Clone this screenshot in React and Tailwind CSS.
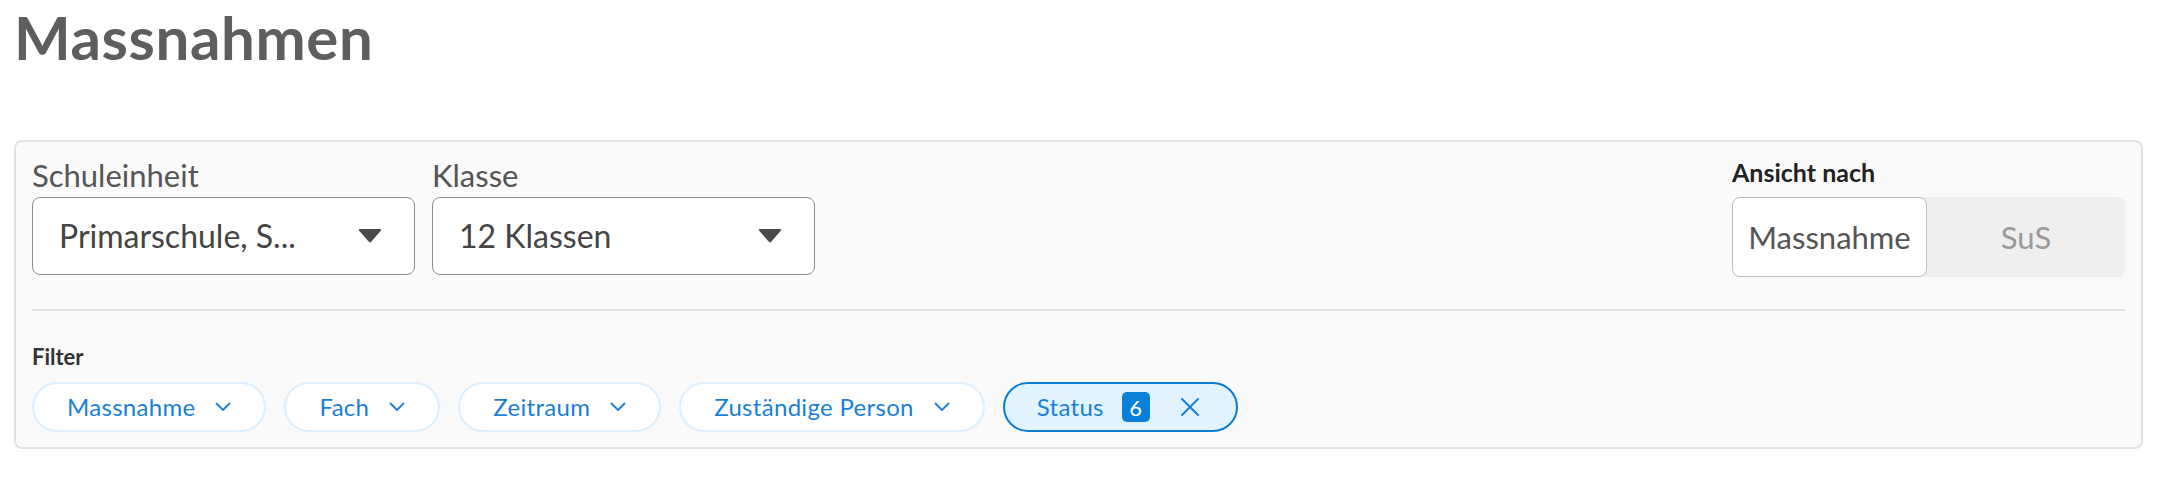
import React from "react";

const font = { fontFamily: "Lato, 'Noto Sans', sans-serif" };

function Chevron() {
  return (
    <svg width="16" height="10" viewBox="0 0 16 10" fill="none" className="shrink-0">
      <polyline points="1.5,1.5 8,8 14.5,1.5" stroke="#1a7fd8" strokeWidth="1.8" strokeLinecap="round" strokeLinejoin="round" />
    </svg>
  );
}

function Triangle() {
  return (
    <svg width="24" height="14" viewBox="0 0 24 14" className="shrink-0">
      <path d="M1 1.5 Q0 0 2 0 H22 Q24 0 23 1.5 L13.2 12.8 Q12 14 10.8 12.8 Z" fill="#4a4a4a" />
    </svg>
  );
}

function Select({ label, value }) {
  return (
    <div className="flex flex-col">
      <span className="text-[31px] leading-[36px] text-[#555]">{label}</span>
      <div className="mt-[4px] w-[383px] h-[78px] flex items-center justify-between pl-[26px] pr-[32px] border-[1.5px] border-[#8c8c8c] rounded-[8px] bg-white">
        <span className="text-[32px] text-[#444] truncate">{value}</span>
        <Triangle />
      </div>
    </div>
  );
}

function Chip({ label }) {
  return (
    <button className="h-[50px] flex items-center gap-[20px] px-[33px] rounded-full border-2 border-[#ddeffe] bg-white text-[24px] tracking-[0.3px] text-[#1a7fd8]">
      <span>{label}</span>
      <Chevron />
    </button>
  );
}

export default function App() {
  return (
    <div className="min-h-screen bg-white pl-[14px] pr-[25px] pt-[7px]" style={font}>
      <h1 className="text-[60px] leading-none font-bold tracking-[0.6px] text-[#5e5e5e]">Massnahmen</h1>

      <div className="mt-[73px] border-2 border-[#e2e2e2] rounded-[8px] bg-[#fafafa] px-4 pt-[15px] pb-[15px]">
        <div className="flex items-start justify-between">
          <div className="flex gap-[17px]">
            <Select label="Schuleinheit" value="Primarschule, S..." />
            <Select label="Klasse" value="12 Klassen" />
          </div>
          <div className="flex flex-col">
            <span className="text-[25px] leading-[30px] font-bold text-[#222]">Ansicht nach</span>
            <div className="mt-[10px] w-[393px] h-[80px] flex rounded-[8px] bg-[#efefef]">
              <div className="w-[195px] flex items-center justify-center bg-white border-[1.5px] border-[#bdbdbd] rounded-[8px] text-[31px] text-[#555]">
                Massnahme
              </div>
              <div className="flex-1 flex items-center justify-center text-[31px] text-[#9a9a9a]">SuS</div>
            </div>
          </div>
        </div>

        <div className="mt-[32px] h-[2px] bg-[#e2e2e2]"></div>

        <div className="mt-[32px] text-[22px] leading-[28px] font-bold text-[#333]">Filter</div>
        <div className="mt-[11px] flex gap-[18px]">
          <Chip label="Massnahme" />
          <Chip label="Fach" />
          <Chip label="Zeitraum" />
          <Chip label="Zuständige Person" />
          <button className="h-[50px] flex items-center pl-[32px] pr-[36px] rounded-full border-2 border-[#0b7bd3] bg-[#e1f3fe] text-[24px] tracking-[0.3px] text-[#1a7fd8]">
            <span>Status</span>
            <span className="ml-[18px] w-[28px] h-[30px] flex items-center justify-center rounded-[5px] bg-[#0a7fd8] text-white text-[22px]">
              6
            </span>
            <svg width="20" height="20" viewBox="0 0 20 20" className="ml-[30px]" fill="none">
              <line x1="2" y1="2" x2="18" y2="18" stroke="#1a7fd8" strokeWidth="2" strokeLinecap="round" />
              <line x1="18" y1="2" x2="2" y2="18" stroke="#1a7fd8" strokeWidth="2" strokeLinecap="round" />
            </svg>
          </button>
        </div>
      </div>
    </div>
  );
}
